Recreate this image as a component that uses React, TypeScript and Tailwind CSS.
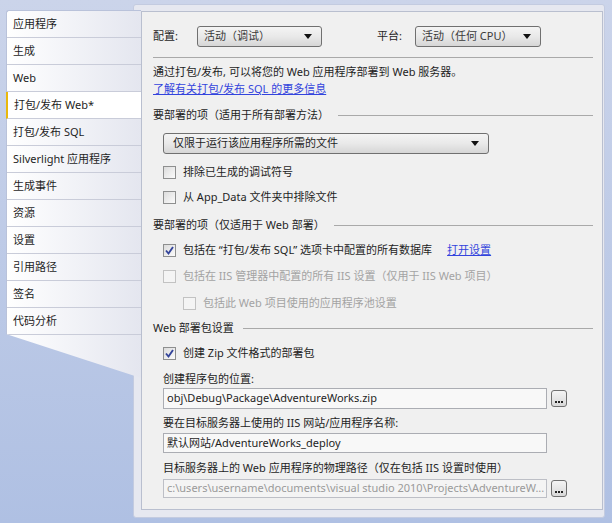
import React from 'react';

const tabs = [
    '应用程序',
    '生成',
    'Web',
    '打包/发布 Web*',
    '打包/发布 SQL',
    'Silverlight 应用程序',
    '生成事件',
    '资源',
    '设置',
    '引用路径',
    '签名',
    '代码分析',
];

const font = { fontFamily: '"Noto Sans", "Noto Sans CJK SC", sans-serif' };

function Arrow() {
    return (
        <svg width="8" height="5" viewBox="0 0 8 5" className="shrink-0">
            <polygon points="0,0 8,0 4,5" fill="#111" />
        </svg>
    );
}

function Select({ text, width }: { text: string; width: string }) {
    return (
        <div className={`${width} h-[21px] flex items-center justify-between pl-[6px] pr-[9px] border border-[#707070] rounded-[3px] bg-gradient-to-b from-[#f4f4f4] via-[#e9e9e9] to-[#d6d6d6] text-[#3a3a3a]`}>
            <span>{text}</span>
            <Arrow />
        </div>
    );
}

function CheckBox({ checked, disabled }: { checked?: boolean; disabled?: boolean }) {
    return (
        <div className={`w-[13px] h-[13px] shrink-0 border flex items-center justify-center ${disabled ? 'border-[#c2c2c2] bg-[#f4f4f4]' : 'border-[#8e8f8f] bg-gradient-to-br from-[#dcdcdc] to-[#fbfbfb]'}`}>
            {checked && (
                <svg width="11" height="11" viewBox="0 0 11 11">
                    <path d="M2 5.5 L4.5 8.5 L9 2" fill="none" stroke="#33449a" strokeWidth="1.9" />
                </svg>
            )}
        </div>
    );
}

function Section({ title }: { title: string }) {
    return (
        <div className="h-[16px] flex items-center gap-[9px] pr-[9px]">
            <span className="whitespace-nowrap">{title}</span>
            <div className="flex-1 h-px bg-[#a9a9a9]" />
        </div>
    );
}

function Dots() {
    return (
        <div className="w-[16px] h-[17px] shrink-0 border border-[#707070] rounded-[3px] bg-gradient-to-b from-[#f4f4f4] to-[#d8d8d8] flex items-end justify-center pb-[3px]">
            <svg width="8" height="2" viewBox="0 0 8 2">
                <rect x="0" y="0" width="2" height="2" fill="#222" />
                <rect x="3" y="0" width="2" height="2" fill="#222" />
                <rect x="6" y="0" width="2" height="2" fill="#222" />
            </svg>
        </div>
    );
}

export default function App() {
    return (
        <div style={font} className="w-[612px] h-[523px] overflow-hidden bg-gradient-to-b from-[#cbd4ea] to-[#afc0e3] text-[11px] text-[#1e1e1e] flex pl-[6px] pt-[4px]">
            <div className="w-[135px] h-[368px] mt-[6px] relative z-10 shrink-0 bg-gradient-to-r from-white to-[#e4e6ef] border-l border-t border-[#b9c2da] rounded-tl-[3px] [clip-path:polygon(0_0,100%_0,100%_100%,0_324px)]">
                {tabs.map((t, i) => (
                    <div
                        key={t}
                        className={`h-[27px] flex items-center pl-[6px] border-b border-[#c9ccd9] ${i === 3 ? 'bg-white border-l-[2px] border-l-[#e9b80c] pl-[5px] -ml-px' : ''}`}
                    >
                        {t}
                    </div>
                ))}
            </div>
            <div className="-ml-[8px] w-[472px] h-[514px] shrink-0 bg-[#e6e8f0] border border-[#c3cbe0] rounded-[3px] pl-[7px] pt-[6px]">
                <div className="w-[462px] h-[499px] bg-[#f0f0f0] border border-[#b9bfcf] pl-[11px] pt-[14px] flex flex-col">
                    <div className="h-[21px] flex items-center">
                        <span className="w-[44px]">配置:</span>
                        <Select text="活动（调试）" width="w-[125px]" />
                        <span className="ml-[55px] w-[38px]">平台:</span>
                        <Select text="活动（任何 CPU）" width="w-[126px]" />
                    </div>
                    <div className="mt-[10px] mr-[9px] h-px bg-[#a9a9a9]" />
                    <div className="mt-[6px] h-[16px] leading-[16px]">通过打包/发布, 可以将您的 Web 应用程序部署到 Web 服务器。</div>
                    <div className="mt-[1px] h-[16px] leading-[16px]">
                        <span className="text-[#3344dd] underline">了解有关打包/发布 SQL 的更多信息</span>
                    </div>
                    <div className="mt-[10px]">
                        <Section title="要部署的项（适用于所有部署方法）" />
                    </div>
                    <div className="mt-[10px] ml-[10px]">
                        <div className="w-[326px] h-[21px] flex items-center justify-between pl-[9px] pr-[9px] border border-[#707070] rounded-[3px] bg-gradient-to-b from-[#f4f4f4] via-[#e9e9e9] to-[#d6d6d6]">
                            <span>仅限于运行该应用程序所需的文件</span>
                            <Arrow />
                        </div>
                    </div>
                    <div className="mt-[10px] ml-[10px] h-[16px] flex items-center gap-[7px]">
                        <CheckBox />
                        <span>排除已生成的调试符号</span>
                    </div>
                    <div className="mt-[9px] ml-[10px] h-[16px] flex items-center gap-[7px]">
                        <CheckBox />
                        <span>从 App_Data 文件夹中排除文件</span>
                    </div>
                    <div className="mt-[12px]">
                        <Section title="要部署的项（仅适用于 Web 部署）" />
                    </div>
                    <div className="mt-[9px] ml-[10px] h-[16px] flex items-center gap-[7px]">
                        <CheckBox checked />
                        <span>包括在 “打包/发布 SQL” 选项卡中配置的所有数据库</span>
                        <span className="ml-[8px] text-[#3344dd] underline">打开设置</span>
                    </div>
                    <div className="mt-[10px] ml-[10px] h-[16px] flex items-center gap-[7px] text-[#a3a3a3]">
                        <CheckBox disabled />
                        <span>包括在 IIS 管理器中配置的所有 IIS 设置（仅用于 IIS Web 项目）</span>
                    </div>
                    <div className="mt-[11px] ml-[30px] h-[16px] flex items-center gap-[7px] text-[#a3a3a3]">
                        <CheckBox disabled />
                        <span>包括此 Web 项目使用的应用程序池设置</span>
                    </div>
                    <div className="mt-[9px]">
                        <Section title="Web 部署包设置" />
                    </div>
                    <div className="mt-[9px] ml-[10px] h-[16px] flex items-center gap-[7px]">
                        <CheckBox checked />
                        <span>创建 Zip 文件格式的部署包</span>
                    </div>
                    <div className="mt-[10px] ml-[10px] h-[16px] leading-[16px]">创建程序包的位置:</div>
                    <div className="mt-[1px] ml-[10px] flex items-center gap-[4px]">
                        <div className="w-[384px] h-[21px] border border-[#abadb3] bg-[#f8f8f8] pl-[3px] flex items-center">obj\Debug\Package\AdventureWorks.zip</div>
                        <Dots />
                    </div>
                    <div className="mt-[6px] ml-[10px] h-[16px] leading-[16px]">要在目标服务器上使用的 IIS 网站/应用程序名称:</div>
                    <div className="mt-[2px] ml-[10px]">
                        <div className="w-[384px] h-[20px] border border-[#abadb3] bg-[#f8f8f8] pl-[3px] flex items-center">默认网站/AdventureWorks_deploy</div>
                    </div>
                    <div className="mt-[7px] ml-[10px] h-[16px] leading-[16px]">目标服务器上的 Web 应用程序的物理路径（仅在包括 IIS 设置时使用）</div>
                    <div className="mt-[3px] ml-[10px] flex items-center gap-[4px]">
                        <div className="w-[384px] h-[19px] border border-[#bdbfc6] bg-[#f4f4f4] pl-[3px] flex items-center text-[#9a9a9a] whitespace-nowrap overflow-hidden">c:\users\username\documents\visual studio 2010\Projects\AdventureW...</div>
                        <Dots />
                    </div>
                </div>
            </div>
        </div>
    );
}
